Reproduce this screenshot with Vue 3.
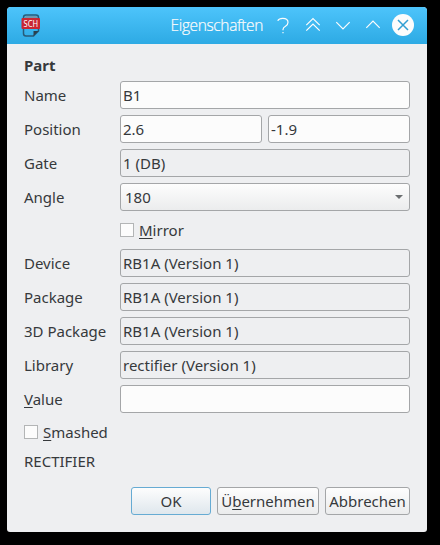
<template>
  <div class="desktop">
    <div class="window">
      <header class="titlebar">
        <svg class="app-icon" width="20" height="26" viewBox="0 0 20 26">
          <path d="M4 5v-.5q0-1.500 1.500-1.500h9.500q1.500 0 1.500 1.500v.5z" fill="#7097ae" />
          <path d="M5 2h10q2.500 0 2.500 2.500v13.500l-5 5h-7.500q-2.500 0-2.500-2.500v-16q0-2.500 2.500-2.500z" fill="none" stroke="#285b78" stroke-width="1.500" />
          <path d="M12.500 23v-5h5z" fill="#29404e" />
          <rect x="0.500" y="5" width="18.500" height="11" rx="1" fill="#c92733" />
          <text x="2.500" y="13.700" textLength="14.500" lengthAdjust="spacingAndGlyphs">SCH</text>
        </svg>
        <span class="title">Eigenschaften</span>
        <div class="controls">
          <svg width="30" height="30" viewBox="0 0 30 30" class="control">
            <path d="M9.700 10.800q1.300-2.500 5-2.500 5.300 0 5.300 4 0 2.500-2.500 3.900t-2.500 3.300v.8M15 22v1.300" />
          </svg>
          <svg width="30" height="30" viewBox="0 0 30 30" class="control">
            <path d="M8.300 15.200l6.700-6.700 6.700 6.700M8.300 20.700l6.700-6.700 6.700 6.700" />
          </svg>
          <svg width="30" height="30" viewBox="0 0 30 30" class="control">
            <path d="M8.300 12.200l6.700 6.700 6.700-6.700" />
          </svg>
          <svg width="30" height="30" viewBox="0 0 30 30" class="control">
            <path d="M8.300 17.800l6.700-6.700 6.700 6.700" />
          </svg>
          <svg width="30" height="30" viewBox="0 0 30 30" class="control">
            <circle cx="15" cy="15" r="11" fill="#fcfcfc" stroke="none" />
            <path d="M10 10l10 10M20 10l-10 10" class="cross" />
          </svg>
        </div>
      </header>

      <form class="content" @submit.prevent>
        <div class="heading">Part</div>

        <label class="row">
          <span class="label">Name</span>
          <input v-model="part.name" class="field" />
        </label>
        <div class="row">
          <span class="label">Position</span>
          <input v-model="part.x" class="field" />
          <input v-model="part.y" class="field" />
        </div>
        <label class="row">
          <span class="label">Gate</span>
          <input :value="part.gate" class="field" readonly />
        </label>
        <label class="row">
          <span class="label">Angle</span>
          <span class="select">
            <select v-model="part.angle" class="field">
              <option v-for="angle in angles" :key="angle">{{ angle }}</option>
            </select>
            <span class="arrow"></span>
          </span>
        </label>
        <label class="check indent">
          <input v-model="part.mirror" type="checkbox" class="box" />
          <span><u>M</u>irror</span>
        </label>

        <label v-for="item in info" :key="item.label" class="row">
          <span class="label">{{ item.label }}</span>
          <input :value="item.value" class="field" readonly />
        </label>
        <label class="row">
          <span class="label"><u>V</u>alue</span>
          <input v-model="part.value" class="field" />
        </label>
        <label class="check">
          <input v-model="part.smashed" type="checkbox" class="box" />
          <span><u>S</u>mashed</span>
        </label>
        <div class="description">RECTIFIER</div>

        <div class="buttons">
          <button class="button ok">OK</button>
          <button class="button apply" type="button"><span>Ü<u>b</u>ernehmen</span></button>
          <button class="button cancel" type="button">Abbrechen</button>
        </div>
      </form>
    </div>
  </div>
</template>

<script setup>
import { reactive } from 'vue';

const angles = ['0', '90', '180', '270'];

const part = reactive({
  name: 'B1',
  x: '2.6',
  y: '-1.9',
  gate: '1 (DB)',
  angle: '180',
  mirror: false,
  value: '',
  smashed: false,
});

const info = [
  { label: 'Device', value: 'RB1A (Version 1)' },
  { label: 'Package', value: 'RB1A (Version 1)' },
  { label: '3D Package', value: 'RB1A (Version 1)' },
  { label: 'Library', value: 'rectifier (Version 1)' },
];
</script>

<style>
body {
  margin: 0;
  background: #000;
}
</style>

<style scoped>
.desktop {
  box-sizing: border-box;
  width: 440px;
  height: 545px;
  padding: 7px 13px 13px 7px;
  background: #000;
  font-family: "Noto Sans", sans-serif;
  font-size: 15px;
  color: #36393c;
}

.window {
  height: 525px;
  border-radius: 4px 4px 3px 3px;
  overflow: hidden;
  background: #eeeff1;
}

.titlebar {
  display: flex;
  align-items: center;
  box-sizing: border-box;
  height: 37px;
  padding: 0 9px 0 14px;
  background: linear-gradient(#4dc4fb, #2daae4);
}

.app-icon {
  flex: none;
  overflow: visible;
}

.app-icon text {
  font-size: 9px;
  fill: #fff;
}

.title {
  margin-left: auto;
  margin-right: 5px;
  padding-bottom: 2px;
  font-family: "Open Sans", sans-serif;
  font-weight: 300;
  font-size: 15.5px;
  letter-spacing: -0.37px;
  color: #fcfcfc;
  -webkit-text-stroke: 0.2px #fcfcfc;
}

.controls {
  display: flex;
  height: 31px;
}

.control {
  fill: none;
  stroke: #fcfcfc;
  stroke-width: 1.2;
}

.control .cross {
  stroke: #319fd3;
  stroke-width: 1.5;
}

.content {
  display: flex;
  flex-direction: column;
  gap: 6px;
  padding: 13px 17px 0;
}

.heading {
  height: 18px;
  line-height: 16px;
  font-weight: bold;
}

.row {
  display: flex;
  gap: 6px;
  height: 28px;
  line-height: 28px;
}

.label {
  flex: 0 0 90px;
  white-space: nowrap;
}

u {
  text-decoration: underline;
  text-decoration-thickness: 1px;
  text-underline-offset: 2px;
  text-decoration-skip-ink: none;
}

.field {
  box-sizing: border-box;
  flex: 1 1 0;
  min-width: 0;
  height: 28px;
  margin: 0;
  padding: 0 2px;
  border: 1px solid #a4a6a8;
  border-radius: 3px;
  outline: none;
  background: #fcfcfc;
  font: inherit;
  color: inherit;
}

.field:read-only {
  background: #eeeff1;
}

.select {
  position: relative;
  display: flex;
  flex: 1;
}

.select .field {
  appearance: none;
  padding: 0 4px 1px;
  line-height: 24px;
  background: linear-gradient(#fdfdfd, #ebeced);
}

.arrow {
  position: absolute;
  top: 12px;
  right: 7px;
  border: 4px solid transparent;
  border-top-color: #6b6e70;
  border-bottom: 0;
}

.check {
  display: flex;
  align-items: center;
  gap: 5px;
  height: 26px;
}

.indent {
  margin-left: 96px;
}

.box {
  appearance: none;
  box-sizing: border-box;
  width: 14px;
  height: 14px;
  margin: 0;
  border: 1px solid #b3b5b6;
  background: #fcfcfc;
}

.description {
  height: 21px;
  line-height: 21px;
}

.buttons {
  display: flex;
  justify-content: flex-end;
  gap: 6px;
  margin-top: 9px;
}

.button {
  box-sizing: border-box;
  height: 28px;
  padding: 0;
  border: 1px solid #a4a6a8;
  border-radius: 3px;
  background: linear-gradient(#fdfdfd, #ebeced);
  font: inherit;
  color: inherit;
  white-space: nowrap;
}

.ok {
  width: 80px;
  border-color: #66abd3;
  background: linear-gradient(#fdfdfd, #dfe7ed);
}

.apply {
  width: 102px;
}

.cancel {
  width: 85px;
}
</style>
